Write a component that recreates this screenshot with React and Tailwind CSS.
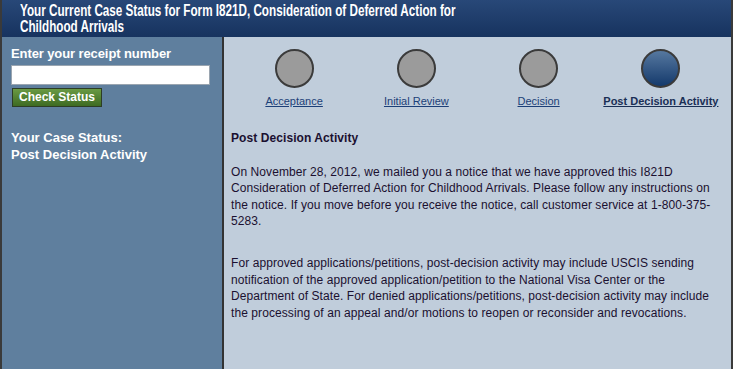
const steps = [
  { label: "Acceptance", active: false },
  { label: "Initial Review", active: false },
  { label: "Decision", active: false },
  { label: "Post Decision Activity", active: true },
]

export default function App() {
  return (
    <div className="w-[733px] h-[369px] overflow-hidden bg-[#c0cddb] font-['Liberation_Sans',Arial,sans-serif] flex flex-col border-x-2 border-[#3a3a3a]">
      {/* Header */}
      <div className="h-[37px] shrink-0 bg-gradient-to-b from-[#284878] to-[#17335f] pl-[18px] pt-[3px]">
        <h1 className="inline-block origin-left scale-x-[0.73] whitespace-nowrap text-white font-bold text-[16px] leading-[16px]">
          Your Current Case Status for Form I821D, Consideration of Deferred Action for
          <br />
          Childhood Arrivals
        </h1>
      </div>

      <div className="flex flex-1 min-h-0">
        {/* Sidebar */}
        <div className="w-[222px] shrink-0 bg-[#5f7f9e] border-r-2 border-[#333] px-[9px] pt-[9px] text-white">
          <div className="font-bold text-[13px] leading-[16px] tracking-[-0.1px]">Enter your receipt number</div>
          <input
            type="text"
            className="mt-[3px] block w-[199px] h-[20px] bg-white border border-[#9aa5b0]"
          />
          <button className="mt-[3px] ml-[1px] block h-[19px] px-[6px] bg-gradient-to-b from-[#6a9a44] to-[#3e6b22] border border-[#2d3d25] text-white font-bold text-[12px] leading-[15px]">
            Check Status
          </button>
          <div className="mt-[22px] font-bold text-[13px] leading-[17px]">
            Your Case Status:
            <br />
            Post Decision Activity
          </div>
        </div>

        {/* Main */}
        <div className="flex-1 min-w-0">
          <div className="grid grid-cols-4 px-[9px] pt-[12px]">
            {steps.map((s) => (
              <div key={s.label} className="flex flex-col items-center">
                <div
                  className={
                    s.active
                      ? "w-[39px] h-[39px] rounded-full border-2 border-[#3b3b3b] bg-gradient-to-b from-[#56789f] to-[#143a6c]"
                      : "w-[39px] h-[39px] rounded-full border-2 border-[#3b3b3b] bg-[#9b9b9b]"
                  }
                />
                <a
                  href="#"
                  className={
                    s.active
                      ? "mt-[6px] text-[11px] leading-[14px] font-bold text-[#1a2f55] underline"
                      : "mt-[6px] text-[11px] leading-[14px] text-[#1c3f78] underline"
                  }
                >
                  {s.label}
                </a>
              </div>
            ))}
          </div>

          <div className="px-[7px] pt-[22px] text-[12px] leading-[16.6px] tracking-[0.08px] text-[#1b1030] whitespace-nowrap">
            <p className="font-bold">Post Decision Activity</p>
            <p className="mt-[17px]">
              On November 28, 2012, we mailed you a notice that we have approved this I821D
              <br />
              Consideration of Deferred Action for Childhood Arrivals. Please follow any instructions on
              <br />
              the notice. If you move before you receive the notice, call customer service at 1-800-375-
              <br />
              5283.
            </p>
            <p className="mt-[25px]">
              For approved applications/petitions, post-decision activity may include USCIS sending
              <br />
              notification of the approved application/petition to the National Visa Center or the
              <br />
              Department of State. For denied applications/petitions, post-decision activity may include
              <br />
              the processing of an appeal and/or motions to reopen or reconsider and revocations.
            </p>
          </div>
        </div>
      </div>
    </div>
  )
}
